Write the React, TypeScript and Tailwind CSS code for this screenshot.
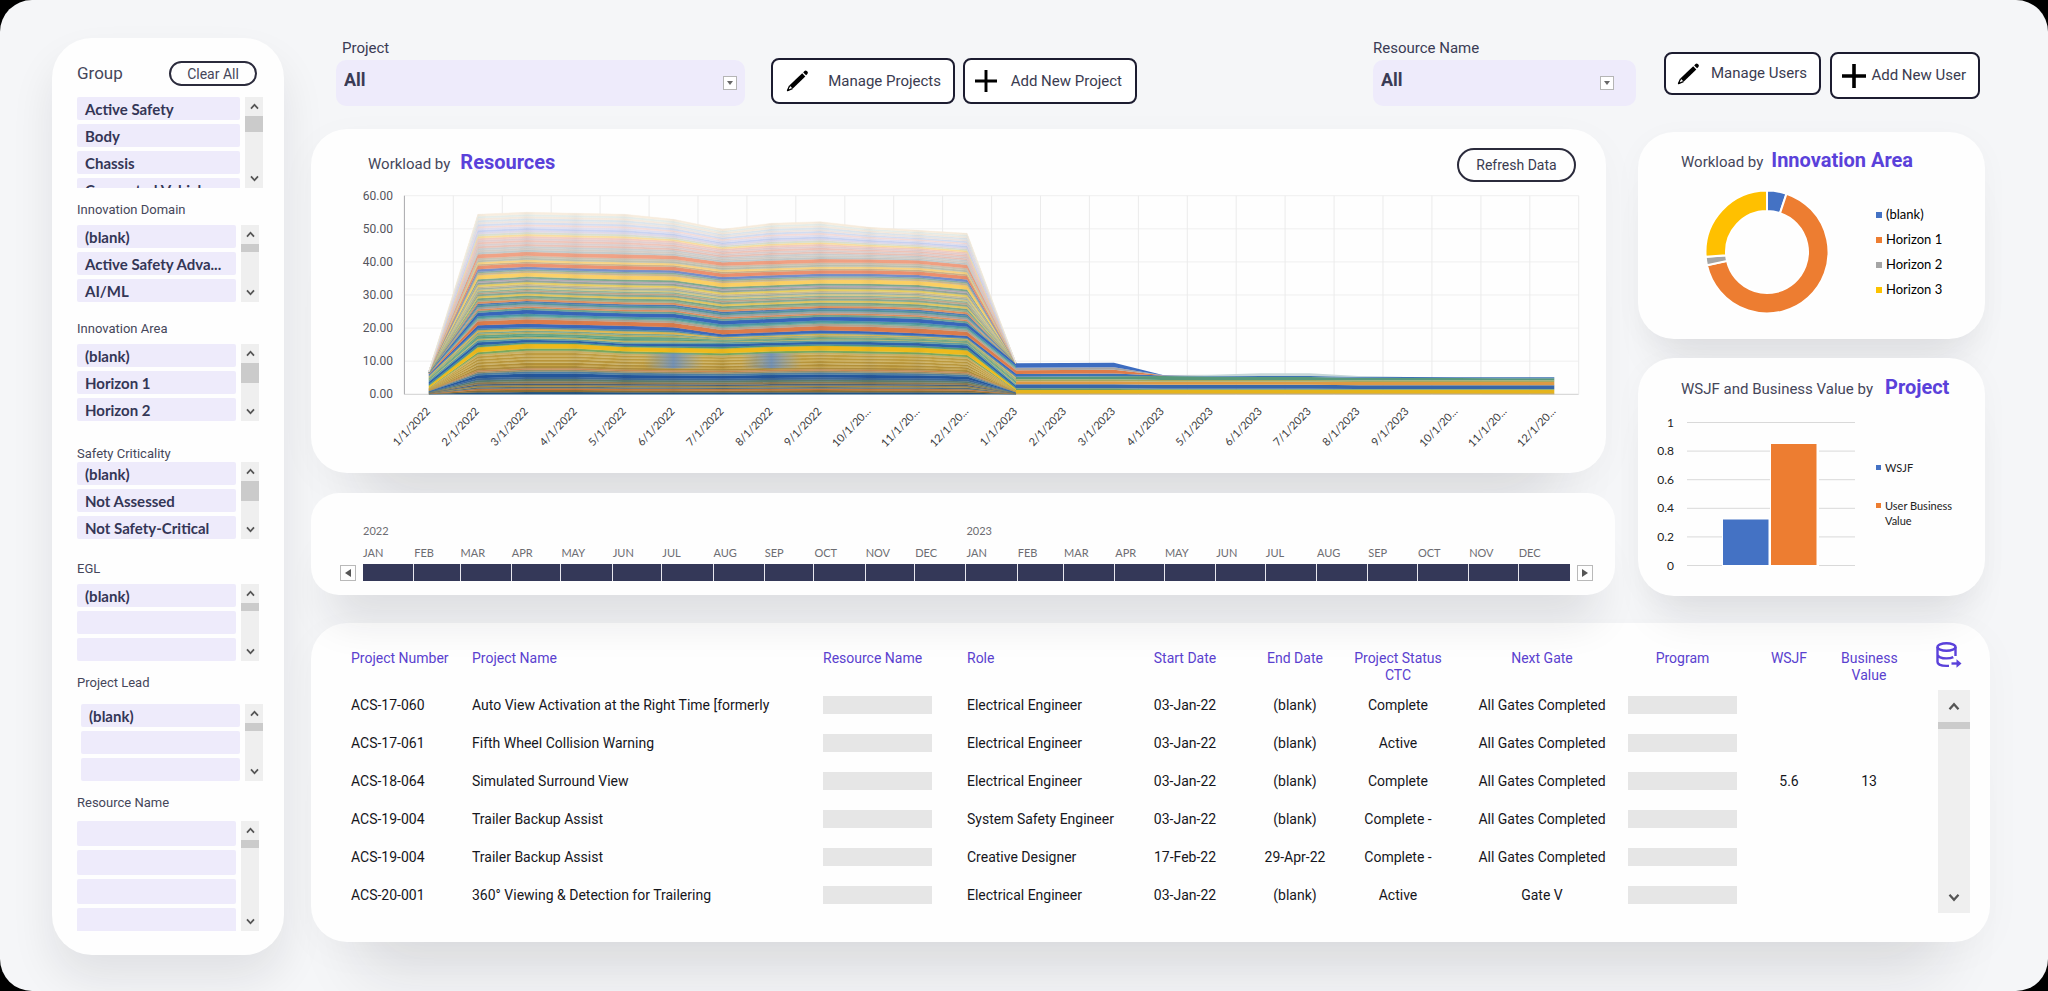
import React from "react";

/* ---------- shared pieces ---------- */

const CARD = "bg-[#fefefe]";
const DEEP_SHADOW = "rounded-[36px] shadow-[0_80px_60px_-50px_rgba(24,26,34,0.11),0_10px_40px_0_rgba(24,26,34,0.03)]";
const SIDE_SHADOW = "rounded-[36px] shadow-[0_40px_44px_-20px_rgba(24,26,34,0.09),0_6px_30px_0_rgba(24,26,34,0.03)]";
const STRIP_SHADOW = "rounded-[28px] shadow-[0_44px_44px_-20px_rgba(24,26,34,0.11)]";

function Chevron({ up = false, large = false }: { up?: boolean; large?: boolean }) {
  return (
    <svg viewBox="0 0 10 8" className={large ? "h-[9px] w-[12px]" : "h-[7px] w-[9px]"} fill="none" stroke="#555" strokeWidth="2" aria-hidden="true">
      <path d={up ? "M1 6.5 L5 2 L9 6.5" : "M1 1.5 L5 6 L9 1.5"} />
    </svg>
  );
}

function ScrollBar({ thumb, large = false }: { thumb: string; large?: boolean }) {
  return (
    <div className={`flex shrink-0 flex-col items-center bg-[#efefef] ${large ? "w-8" : "w-[18px]"}`}>
      <button type="button" aria-label="Scroll up" className={`flex w-full shrink-0 items-center justify-center ${large ? "h-8" : "h-[19px]"}`}>
        <Chevron up large={large} />
      </button>
      <div className={`w-full shrink-0 bg-[#cbcbcb] ${thumb}`} />
      <div className="grow" />
      <button type="button" aria-label="Scroll down" className={`flex w-full shrink-0 items-center justify-center ${large ? "h-8" : "h-[19px]"}`}>
        <Chevron large={large} />
      </button>
    </div>
  );
}

function Pencil() {
  return (
    <svg viewBox="0 0 24 24" className="size-6 shrink-0" aria-hidden="true">
      <path d="M18.2 3.4 19.5 2a1.7 1.7 0 0 1 2.3 0l.6.6a1.7 1.7 0 0 1 0 2.3l-1.3 1.4z" fill="#000" />
      <path d="M17.2 4.3 20.300 7.400 7.600 19.800 4.300 16.500z" fill="#000" />
      <path d="M4.600 16.700 2.500 21.600l4.900-2" fill="#fff" stroke="#000" strokeWidth="1.300" strokeLinejoin="round" />
      <path d="m2.200 22 .8-2.200 1.400 1.400z" fill="#000" />
    </svg>
  );
}

function Plus({ big = false }: { big?: boolean }) {
  return (
    <svg viewBox="0 0 24 24" className={big ? "size-6 shrink-0" : "size-[22px] shrink-0"} fill="none" stroke="#000" strokeWidth={big ? 3.6 : 3.2} aria-hidden="true">
      <path d="M12 0v24M0 12h24" />
    </svg>
  );
}

/* ---------- sidebar ---------- */

type Slicer = {
  label: string;
  items: string[];
  gap: string;
  list: string;
  item: string;
  thumb: string;
};

const SLICERS: Slicer[] = [
  { label: "Innovation Domain", items: ["(blank)", "Active Safety Adva...", "AI/ML"], gap: "mt-[14px]", list: "mt-[7px] h-[77px] w-[182px]", item: "h-[23px]", thumb: "h-2" },
  { label: "Innovation Area", items: ["(blank)", "Horizon 1", "Horizon 2"], gap: "mt-[19px]", list: "mt-[7px] h-[77px] w-[182px]", item: "h-[23px]", thumb: "h-5" },
  { label: "Safety Criticality", items: ["(blank)", "Not Assessed", "Not Safety-Critical"], gap: "mt-[25px]", list: "h-[77px] w-[182px]", item: "h-[23px]", thumb: "h-5" },
  { label: "EGL", items: ["(blank)", "", ""], gap: "mt-[22px]", list: "mt-[7px] h-[77px] w-[182px]", item: "h-[23px]", thumb: "h-2" },
  { label: "Project Lead", items: ["(blank)", "", ""], gap: "mt-[14px]", list: "ml-1 mt-[13px] h-[77px] w-[182px]", item: "h-[23px]", thumb: "h-2" },
  { label: "Resource Name", items: ["", "", "", ""], gap: "mt-[14px]", list: "mt-[10px] h-[110px] w-[182px]", item: "h-[25px]", thumb: "h-2" },
];

function SlicerList({ items, list, item, thumb }: Omit<Slicer, "label" | "gap">) {
  return (
    <div className={`flex gap-[5px] overflow-hidden ${list}`}>
      <ul className="flex min-w-0 flex-1 flex-col gap-1">
        {items.map((text, i) => (
          <li key={i} className={`shrink-0 rounded-[2px] bg-[#eeebfb] ${item}`}>
            {text && (
              <button type="button" className="flex size-full items-center px-2 pt-px text-left font-['Lato','Open_Sans',sans-serif] text-[15px] leading-[22px] font-bold whitespace-nowrap text-[#343656]">
                {text}
              </button>
            )}
          </li>
        ))}
      </ul>
      <ScrollBar thumb={thumb} />
    </div>
  );
}

function Sidebar() {
  return (
    <aside className="w-[232px] shrink-0 self-start rounded-[40px] bg-[#fefefe] px-[25px] pt-[23px] pb-6 shadow-[0_24px_44px_0_rgba(24,26,34,0.09)]">
      <div className="flex h-[25px] items-center justify-between pr-[2px]">
        <h2 className="text-[17px] text-[#45465a]">Group</h2>
        <button type="button" className="h-[25px] w-[88px] rounded-full border-2 border-[#2b2b3c] text-[14px] leading-5 text-[#45465a]">
          Clear All
        </button>
      </div>
      <SlicerList items={["Active Safety", "Body", "Chassis", "Connected Vehicle"]} list="mt-[11px] h-[91px] w-[186px]" item="h-[23px]" thumb="h-4" />
      {SLICERS.map((s) => (
        <section key={s.label} className={s.gap}>
          <h3 className="h-4 text-[13px] leading-4 text-[#45465a]">{s.label}</h3>
          <SlicerList items={s.items} list={s.list} item={s.item} thumb={s.thumb} />
        </section>
      ))}
    </aside>
  );
}

/* ---------- header ---------- */

function Picker({ id, label, width, indent, arrow }: { id: string; label: string; width: string; indent: string; arrow: string }) {
  return (
    <div className={`flex flex-col ${width}`}>
      <label htmlFor={id} className={`h-[22px] text-[15px] leading-5 text-[#3a3b55] ${indent}`}>
        {label}
      </label>
      <div className="relative">
        <select id={id} defaultValue="All" className="h-[46px] w-full appearance-none rounded-[10px] bg-[#eeebfb] px-2 pb-2 text-[18px] font-bold text-[#3a3b55]">
          <option>All</option>
        </select>
        <span className={`pointer-events-none absolute top-4 flex size-[14px] items-center justify-center border border-[#b5b5b5] bg-white ${arrow}`}>
          <svg viewBox="0 0 6 4" className="h-1 w-[6px]" fill="#666" aria-hidden="true">
            <path d="M0 0h6L3 4z" />
          </svg>
        </span>
      </div>
    </div>
  );
}

const ACTION = "flex shrink-0 items-center rounded-lg border-2 border-[#1c1c30] bg-white text-[15px] text-[#3a3b50] whitespace-nowrap";

function Header() {
  return (
    <header className="flex h-[91px] items-start pl-[25px]">
      <Picker id="project" label="Project" width="w-[409px]" indent="pl-[6px]" arrow="right-2" />
      <button type="button" className={`${ACTION} mt-5 ml-[26px] h-[46px] w-[184px] justify-between px-3`}>
        <Pencil />
        Manage Projects
      </button>
      <button type="button" className={`${ACTION} mt-5 ml-2 h-[46px] w-[174px] justify-between pr-[13px] pl-[10px]`}>
        <Plus />
        Add New Project
      </button>
      <div className="ml-auto flex items-start pr-[10px]">
        <Picker id="resource" label="Resource Name" width="w-[263px]" indent="pl-0" arrow="right-[22px]" />
        <button type="button" className={`${ACTION} mt-[14px] ml-7 h-[43px] w-[157px] justify-between pr-3 pl-[10px]`}>
          <Pencil />
          Manage Users
        </button>
        <button type="button" className={`${ACTION} mt-[14px] ml-[9px] h-[47px] w-[150px] justify-between pr-3 pl-[10px]`}>
          <Plus big />
          Add New User
        </button>
      </div>
    </header>
  );
}

/* ---------- stacked area chart ---------- */

const X0 = 93.4;
const STEP = 48.93;
const BASE = 212.3;
const px = (i: number) => X0 + STEP * (i + 0.5);

/* Heights of the guide lines for Jan 2022 .. Jan 2023; every band is interpolated between them. */
const GUIDES: number[][] = [
  [0, 0, 0, 0, 0, 0, 0, 0, 0, 0, 0, 0, 0],
  [7, 45, 49, 49, 46, 45, 44, 46, 47, 46, 45, 42, 4.4],
  [14, 54, 56, 55, 52, 52, 52, 53, 54, 54, 53, 51, 10],
  [20, 68, 69.5, 68.5, 67.5, 66, 59, 61, 63, 62, 60, 57.5, 20],
  [22, 81, 84, 82, 80.5, 80, 73, 75, 77, 76.5, 75, 70.5, 30.7],
  [22.6, 138, 140.5, 139, 138, 137, 130.5, 132, 133.5, 133.5, 132.5, 128, 31],
  [23, 180, 182, 181, 180, 175, 165, 171, 172.6, 167, 164, 161, 31],
];

function heightsFor(h: number): number[] {
  let k = 1;
  while (k < GUIDES.length - 1 && h > GUIDES[k][1]) k++;
  const lo = GUIDES[k - 1];
  const hi = GUIDES[k];
  const t = (h - lo[1]) / (hi[1] - lo[1]);
  return lo.map((v, i) => v + (hi[i] - v) * t);
}

/* [band top at Feb 2022, colour] from the axis upward */
const BANDS: [number, string][] = [
  [2, "#1f5486"], [4, "#8a6f35"], [5.5, "#c5793c"], [7, "#55707a"], [8.5, "#a48a44"], [10, "#47607c"], [12, "#8f7a52"], [14, "#5d7d6c"], [16, "#3f6a96"], [19, "#24569b"], [21, "#4d7fa2"], [22.5, "#93906c"], [24, "#c88b56"],
  [26, "#ad8c3c"], [27, "#c7a64a"], [29, "#b39038"], [30, "#cdb468"], [32, "#b8953a"], [33, "#cfb565"], [35, "#bc9a3d"], [36, "#d0b565"], [38, "#bf9d42"], [40, "#cbb063"],
  [42, "#79a85f"], [47, "#efba1c"], [49, "#4f9a80"], [52, "#2e62ab"], [54, "#5b9ba0"], [55.5, "#c7b765"], [57, "#5b9c7e"], [59, "#66a688"], [60.5, "#bcae5c"], [62, "#7aa890"], [64, "#e0b54c"], [65.5, "#58929e"],
  [69, "#3a69bd"], [73, "#dd7c4b"], [75, "#b1a494"], [76, "#72ab97"], [78, "#4f9aa2"], [81.5, "#3766bb"], [83.5, "#6ba293"], [85, "#e08c5c"], [87, "#a1a3a0"], [89, "#57969e"], [90.5, "#4a7ab5"], [92.5, "#e09160"], [94, "#9caf8d"], [96, "#7aa588"], [98, "#e3c55d"], [100, "#87a994"],
  [101.5, "#c4a688"], [103, "#90b39a"], [104.5, "#d9c880"], [106, "#9fb1a0"], [107.5, "#c9b995"], [109.5, "#e8cf62"], [111.5, "#94a69a"], [113, "#b8a9b4"], [115, "#7ca890"], [119, "#fbcf62"], [121, "#c8b58b"], [122.5, "#8bad9b"], [125, "#6f8ac8"], [128.5, "#ea8a66"], [130, "#c7ad83"], [132, "#f8cf76"],
  [134, "#b6baa8"], [136, "#c4bdab"], [140, "#ee9675"], [142, "#b9c3c4"], [144, "#cfc6bd"], [146, "#c3c7c9"], [148, "#e6b8ab"], [150, "#d4c7c7"], [152, "#ecbaac"], [154, "#dcc5c6"], [156, "#efc1b5"], [158, "#f7d68c"], [160, "#d0d8c4"], [162, "#d7d0e2"], [164, "#bac7ee"], [166, "#d6d6ec"], [168, "#f0d2cf"], [170, "#c6d4ee"], [172, "#e8ddd8"], [174, "#d0dde6"], [176, "#f0e2d2"], [178, "#dce6e2"], [180, "#f5e6d2"],
];

/* Jan .. Dec 2023, [band tops], colour */
const flat = (a: number, b: number, c: number) => [a, a, a, b, b, b, b, c, c, c, c, c];
const TAIL: [number[], string][] = [
  [flat(1, 1, 1), "#b9953a"],
  [flat(4.3, 4.6, 4.6), "#e5b41d"],
  [flat(6, 5.6, 5.4), "#6d9c62"],
  [flat(10, 9.6, 9), "#3767a9"],
  [flat(13, 12.6, 12.2), "#dd9a45"],
  [flat(15, 14.4, 14), "#a7ab60"],
  [[17.6, 17.8, 18, 18.2, 17.8, 17.4, 17.2, 16.6, 16.4, 16.2, 16, 16], "#58987a"],
  [[20.3, 20.5, 20.7, 18.9, 18.4, 18.4, 18.2, 17.6, 17.3, 17.1, 17, 17], "#3d72b3"],
  [[24, 24.3, 24.5, 19, 18.4, 18.4, 18.2, 17.6, 17.3, 17.1, 17, 17], "#de7c48"],
  [[26.5, 26.8, 27, 19.1, 18.4, 18.4, 18.2, 17.6, 17.3, 17.1, 17, 17], "#a8a5a2"],
  [[31, 31.3, 31.6, 19.2, 18.4, 18.4, 18.2, 17.6, 17.3, 17.1, 17, 17], "#3d6cc0"],
  [[31, 31.3, 31.6, 19.2, 19.6, 21, 21, 18.4, 17.3, 17.1, 17, 17], "#c5d6d8"],
];

function areaPath(lower: number[], upper: number[], start: number) {
  const top = upper.map((h, i) => `${px(start + i).toFixed(1)} ${(BASE - h).toFixed(2)}`);
  const bottom = lower.map((h, i) => `${px(start + i).toFixed(1)} ${(BASE - h).toFixed(2)}`).reverse();
  return `M${top.concat(bottom).join("L")}Z`;
}

const MONTH_LABELS = [2022, 2023].flatMap((y) => Array.from({ length: 12 }, (_, m) => (m < 9 ? `${m + 1}/1/${y}` : `${m + 1}/1/20...`)));

function AreaChart() {
  const zeros13 = Array(13).fill(0);
  const zeros12 = Array(12).fill(0);
  const outline = areaPath(zeros13, GUIDES[6], 0);
  return (
    <svg viewBox="0 0 1295 291" className="block w-full" role="img" aria-label="Workload by resources">
      <defs>
        <linearGradient id="spike" x1="0" x2="1">
          <stop offset="0" stopColor="#333" stopOpacity="0" />
          <stop offset="0.5" stopColor="#333" stopOpacity="0.05" />
          <stop offset="1" stopColor="#333" stopOpacity="0" />
        </linearGradient>
        <linearGradient id="cool" x1="0" x2="1">
          <stop offset="0" stopColor="#6f9bd6" stopOpacity="0" />
          <stop offset="0.5" stopColor="#5b8bd0" stopOpacity="0.75" />
          <stop offset="1" stopColor="#6f9bd6" stopOpacity="0" />
        </linearGradient>
        <linearGradient id="fade" x1="0" x2="0" y1="0" y2="1">
          <stop offset="0" stopColor="#fff" stopOpacity="0.3" />
          <stop offset="0.4" stopColor="#fff" stopOpacity="0" />
        </linearGradient>
        <clipPath id="body">
          <path d={outline} />
        </clipPath>
      </defs>
      {Array.from({ length: 7 }, (_, i) => (
        <g key={i}>
          <path d={`M${X0} ${BASE - i * 33.1}H${X0 + STEP * 24}`} stroke={i ? "#efefef" : "#d0d0d0"} />
          <text x="82" y={BASE - i * 33.1 + 4} textAnchor="end" fontSize="12" fill="#55555c">
            {`${i * 10}.00`}
          </text>
        </g>
      ))}
      {Array.from({ length: 25 }, (_, i) => (
        <path key={i} d={`M${(X0 + STEP * i).toFixed(1)} 13.7V${BASE}`} stroke={i ? "#ebebeb" : "#a8a8ac"} />
      ))}
      {BANDS.map(([h, color], i) => (
        <path key={i} d={areaPath(heightsFor(i ? BANDS[i - 1][0] : 0), heightsFor(h), 0)} fill={color} stroke={color} strokeWidth="0.3" />
      ))}
      <g clipPath="url(#body)">
        {[1, 2, 3, 4, 5, 6, 7, 8, 9, 10, 11].map((i) => (
          <rect key={i} x={px(i) - 9} y="30" width="18" height="183" fill="url(#spike)" />
        ))}
        {[5, 7].map((i) => (
          <rect key={i} x={px(i) - 30} y={BASE - 41} width="60" height="15" fill="url(#cool)" />
        ))}
        <rect x={X0} y="30" width="640" height="183" fill="url(#fade)" />
      </g>
      {TAIL.map(([tops, color], i) => (
        <path key={i} d={areaPath(i ? TAIL[i - 1][0] : zeros12, tops, 12)} fill={color} />
      ))}
      {MONTH_LABELS.map((text, i) => (
        <text key={i} transform={`translate(${(px(i) + 2).toFixed(1)} 230) rotate(-46)`} textAnchor="end" fontSize="11" fontFamily="Lato, sans-serif" fill="#3c3c40">
          {text}
        </text>
      ))}
    </svg>
  );
}

const TITLE = "flex items-baseline text-[15px] leading-7 text-[#45465a]";
const TITLE_STRONG = "text-[20px] font-bold text-[#5a41da]";

function WorkloadByResources() {
  return (
    <section className={`${CARD} ${DEEP_SHADOW} mr-[9px] pt-[19px]`}>
      <div className="flex h-[34px] items-start justify-between pr-[30px] pl-[57px]">
        <h2 className={`${TITLE} gap-[10px]`}>
          Workload by <strong className={TITLE_STRONG}>Resources</strong>
        </h2>
        <button type="button" className="h-[34px] w-[119px] rounded-full border-2 border-[#2b2b3c] text-[14px] text-[#3a3b50]">
          Refresh Data
        </button>
      </div>
      <AreaChart />
    </section>
  );
}

/* ---------- timeline ---------- */

const MONTHS = ["JAN", "FEB", "MAR", "APR", "MAY", "JUN", "JUL", "AUG", "SEP", "OCT", "NOV", "DEC"];
const MONTH_GRID = "grid grid-cols-[31fr_28fr_31fr_30fr_31fr_30fr_31fr_31fr_30fr_31fr_30fr_31fr_31fr_28fr_31fr_30fr_31fr_30fr_31fr_31fr_30fr_31fr_30fr_31fr]";

function Timeline() {
  return (
    <section className={`${CARD} ${STRIP_SHADOW} flex items-end gap-[7px] pt-[27px] pr-[22px] pb-[14px] pl-[29px] font-['Lato',sans-serif] text-[11px] leading-[22px] text-[#6d6d72]`}>
      <button type="button" aria-label="Earlier" className="flex size-4 shrink-0 items-center justify-center border border-[#b9b9b9]">
        <svg viewBox="0 0 6 8" className="h-2 w-[6px]" fill="#555" aria-hidden="true"><path d="M6 0v8L0 4z" /></svg>
      </button>
      <div className={`min-w-0 flex-1 ${MONTH_GRID}`}>
        <span className="col-span-12">2022</span>
        <span className="col-span-12">2023</span>
        {[...MONTHS, ...MONTHS].map((m, i) => (
          <span key={i} className="h-[22px]">{m}</span>
        ))}
        {[...MONTHS, ...MONTHS].map((_, i) => (
          <button key={i} type="button" aria-label={`${MONTHS[i % 12]} ${i < 12 ? 2022 : 2023}`} className="h-[17px] border-r border-[#e8e8ee] bg-[#343858] last:border-r-0" />
        ))}
      </div>
      <button type="button" aria-label="Later" className="flex size-4 shrink-0 items-center justify-center border border-[#b9b9b9]">
        <svg viewBox="0 0 6 8" className="h-2 w-[6px]" fill="#555" aria-hidden="true"><path d="M0 0v8l6-4z" /></svg>
      </button>
    </section>
  );
}

/* ---------- right-hand cards ---------- */

function arc(a0: number, a1: number) {
  const p = (r: number, a: number) => {
    const t = ((a - 90) * Math.PI) / 180;
    return `${(62 + r * Math.cos(t)).toFixed(2)} ${(62 + r * Math.sin(t)).toFixed(2)}`;
  };
  const large = a1 - a0 > 180 ? 1 : 0;
  return `M${p(61.5, a0)}A61.5 61.5 0 ${large} 1 ${p(61.5, a1)}L${p(41, a1)}A41 41 0 ${large} 0 ${p(41, a0)}Z`;
}

const SLICES = [
  { label: "(blank)", from: 0, to: 18.5, fill: "#4472c4", dot: "bg-[#4472c4]" },
  { label: "Horizon 1", from: 18.5, to: 257.5, fill: "#ed7d31", dot: "bg-[#ed7d31]" },
  { label: "Horizon 2", from: 257.5, to: 265.5, fill: "#a5a5a5", dot: "bg-[#a5a5a5]" },
  { label: "Horizon 3", from: 265.5, to: 360, fill: "#ffc000", dot: "bg-[#fcc200]" },
];

function WorkloadByArea() {
  return (
    <section className={`${CARD} ${SIDE_SHADOW} h-[207px] pt-[14px]`}>
      <h2 className={`${TITLE} gap-2 pl-[43px]`}>
        Workload by <strong className={TITLE_STRONG}>Innovation Area</strong>
      </h2>
      <div className="mt-[14px] flex items-center gap-[47px] pl-[67px]">
        <svg viewBox="0 0 124 124" className="size-[124px]" role="img" aria-label="Workload by innovation area">
          {SLICES.map((s) => (
            <path key={s.label} d={arc(s.from, s.to)} fill={s.fill} stroke="#fff" strokeWidth="2" />
          ))}
        </svg>
        <ul className="font-['Lato',sans-serif] text-[13px] leading-[25px] text-black">
          {SLICES.map((s) => (
            <li key={s.label} className="flex items-center gap-1">
              <i className={`size-[6px] ${s.dot}`} />
              {s.label}
            </li>
          ))}
        </ul>
      </div>
    </section>
  );
}

function BusinessValue() {
  return (
    <section className={`${CARD} ${SIDE_SHADOW} h-[238px] pt-[15px]`}>
      <h2 className={`${TITLE} gap-3 pl-[43px]`}>
        WSJF and Business Value by <strong className={TITLE_STRONG}>Project</strong>
      </h2>
      <div className="mt-[11px] flex gap-[18px] pl-4">
        <svg viewBox="0 0 204 160" className="h-[160px] w-[204px] shrink-0" role="img" aria-label="WSJF and business value">
          {["0", "0.2", "0.4", "0.6", "0.8", "1"].map((t, i) => (
            <g key={t}>
              <path d={`M33 ${151.5 - i * 28.6}H201`} stroke="#d9d9d9" />
              <text x="20" y={155.5 - i * 28.6} textAnchor="end" fontSize="12" fontFamily="Lato, sans-serif" fill="#222">{t}</text>
            </g>
          ))}
          <rect x="68" y="104" width="48" height="49" fill="#fff" />
          <rect x="69" y="105.5" width="45.5" height="45.5" fill="#4472c4" />
          <rect x="116" y="29" width="49" height="124" fill="#fff" />
          <rect x="117" y="30" width="45.5" height="121" fill="#ed7d31" />
        </svg>
        <ul className="pt-[46px] font-['Lato',sans-serif] text-[11px] leading-[15px] text-[#222]">
          <li className="flex gap-1">
            <i className="mt-[5px] size-[5px] shrink-0 bg-[#4472c4]" />
            WSJF
          </li>
          <li className="mt-[23px] flex gap-1">
            <i className="mt-[5px] size-[5px] shrink-0 bg-[#ed7d31]" />
            <span>User Business<br />Value</span>
          </li>
        </ul>
      </div>
    </section>
  );
}

/* ---------- project table ---------- */

const ROWS = [
  ["ACS-17-060", "Auto View Activation at the Right Time [formerly", "Electrical Engineer", "03-Jan-22", "(blank)", "Complete", "All Gates Completed", "", ""],
  ["ACS-17-061", "Fifth Wheel Collision Warning", "Electrical Engineer", "03-Jan-22", "(blank)", "Active", "All Gates Completed", "", ""],
  ["ACS-18-064", "Simulated Surround View", "Electrical Engineer", "03-Jan-22", "(blank)", "Complete", "All Gates Completed", "5.6", "13"],
  ["ACS-19-004", "Trailer Backup Assist", "System Safety Engineer", "03-Jan-22", "(blank)", "Complete -", "All Gates Completed", "", ""],
  ["ACS-19-004", "Trailer Backup Assist", "Creative Designer", "17-Feb-22", "29-Apr-22", "Complete -", "All Gates Completed", "", ""],
  ["ACS-20-001", "360° Viewing & Detection for Trailering", "Electrical Engineer", "03-Jan-22", "(blank)", "Active", "Gate V", "", ""],
];

function Redacted() {
  return <div className="h-[18px] w-[109px] bg-[#e6e6e6]" />;
}

function ProjectTable() {
  return (
    <section className={`${CARD} ${DEEP_SHADOW} mt-[27px] flex h-[319px] justify-between pt-[19px] pr-5 pl-10`}>
      <table className="w-[1546px] min-w-0 shrink table-fixed border-collapse self-start text-[14px] leading-[17px] text-[#16161c]">
        <colgroup>
          <col className="w-[121px]" />
          <col className="w-[351px]" />
          <col className="w-[144px]" />
          <col className="w-[153px]" />
          <col className="w-[130px]" />
          <col className="w-[90px]" />
          <col className="w-[116px]" />
          <col className="w-[172px]" />
          <col className="w-[109px]" />
          <col className="w-[104px]" />
          <col className="w-[56px]" />
        </colgroup>
        <thead className="text-[#5a41cf]">
          <tr className="h-11 align-top *:pt-2 *:font-normal">
            <th className="text-left whitespace-nowrap">Project Number</th>
            <th className="text-left">Project Name</th>
            <th className="text-left">Resource Name</th>
            <th className="text-left">Role</th>
            <th>Start Date</th>
            <th>End Date</th>
            <th>Project Status<br />CTC</th>
            <th>Next Gate</th>
            <th>Program</th>
            <th>WSJF</th>
            <th>Business<br />Value</th>
          </tr>
        </thead>
        <tbody>
          {ROWS.map((r, i) => (
            <tr key={i} className="h-[38px] text-center">
              <td className="text-left">{r[0]}</td>
              <td className="text-left">{r[1]}</td>
              <td><Redacted /></td>
              <td className="text-left whitespace-nowrap">{r[2]}</td>
              <td>{r[3]}</td>
              <td>{r[4]}</td>
              <td>{r[5]}</td>
              <td>{r[6]}</td>
              <td><Redacted /></td>
              <td>{r[7]}</td>
              <td>{r[8]}</td>
            </tr>
          ))}
        </tbody>
      </table>
      <div className="flex flex-col items-start">
        <button type="button" aria-label="Export data" className="mb-[22px] -ml-[2px]">
          <svg viewBox="0 0 26 26" className="size-[26px]" fill="none" stroke="#5a41da" strokeWidth="2.4" aria-hidden="true">
            <ellipse cx="10.5" cy="5" rx="9" ry="3.7" />
            <path d="M1.5 5v15c0 2.2 3.6 3.9 9 3.9h2.5M19.5 5v9M1.5 12.5c0 2.2 4 3.9 9 3.9 2.8 0 5.2-.5 6.8-1.3" />
            <path d="M15.5 21.5h7" />
            <path d="M20.5 17.3 25.5 21.5l-5 4.2z" fill="#5a41da" stroke="none" />
          </svg>
        </button>
        <div className="flex h-[223px]">
          <ScrollBar thumb="h-[7px]" large />
        </div>
      </div>
    </section>
  );
}

/* ---------- page ---------- */

export default function App() {
  return (
    <div className="min-h-screen bg-black font-['Roboto','Open_Sans',sans-serif]">
      <div className="flex min-h-screen gap-[27px] overflow-hidden rounded-[32px] bg-[#f5f6f8] pt-[38px] pr-[58px] pb-9 pl-[52px]">
        <Sidebar />
        <main className="min-w-0 flex-1">
          <Header />
          <div className="flex items-start gap-[23px] pr-[5px]">
            <div className="flex min-w-0 flex-1 flex-col gap-5">
              <WorkloadByResources />
              <Timeline />
            </div>
            <div className="mt-[3px] flex w-[347px] shrink-0 flex-col gap-[19px]">
              <WorkloadByArea />
              <BusinessValue />
            </div>
          </div>
          <ProjectTable />
        </main>
      </div>
    </div>
  );
}
